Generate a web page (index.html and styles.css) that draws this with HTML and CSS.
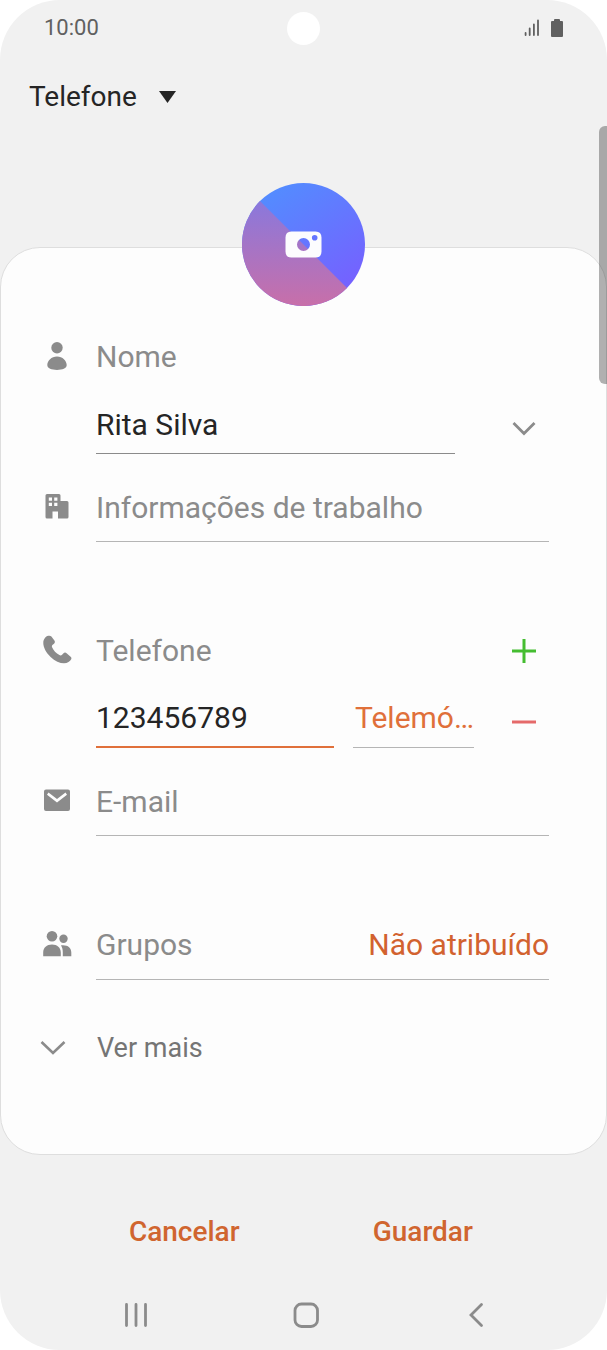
FILE: index.html
```html
<!DOCTYPE html>
<html lang="pt">
<head>
<meta charset="utf-8">
<meta name="viewport" content="width=device-width, initial-scale=1">
<title>Novo contacto</title>
<link rel="stylesheet" href="styles.css">
</head>
<body>
<form class="screen">
  <header class="status">
    <time class="status-time">10:00</time>
    <span class="status-camera"></span>
    <span class="status-icons">
      <svg width="16" height="18" viewBox="0 0 16 18" fill="none" stroke="#606060" stroke-width="1.8" stroke-linecap="round"><path d="M1.6 14v2M5.7 9.500V16M9.900 5.500V16M14 1.500V16"/></svg>
      <svg width="12" height="18" viewBox="0 0 12 18" fill="#606060"><path d="M3 2V1q0-1 1-1h4q1 0 1 1v1h2q1 0 1 1v14q0 1-1 1H1q-1 0-1-1V3q0-1 1-1z"/></svg>
    </span>
  </header>

  <label class="account">
    <select class="account-select" aria-label="Guardar contacto em"><option>Telefone</option></select>
    <svg width="17" height="12" viewBox="0 0 17 12" fill="#252525"><path d="M0 0h17L8.500 12z"/></svg>
  </label>

  <main class="card">
    <button class="avatar" type="button" aria-label="Adicionar fotografia">
      <svg viewBox="0 0 123 123">
        <defs>
          <linearGradient id="blue" x1="0.150" y1="0" x2="0.850" y2="1"><stop offset="0" stop-color="#5090ff"/><stop offset="1" stop-color="#795cff"/></linearGradient>
          <linearGradient id="pink" x1="0" y1="0" x2="0" y2="1"><stop offset="0" stop-color="#8a78dc"/><stop offset="1" stop-color="#c86fa9"/></linearGradient>
        </defs>
        <circle cx="61.500" cy="61.500" r="61.500" fill="url(#blue)"/>
        <path d="M18 18A61.500 61.500 0 0 0 105 105z" fill="url(#pink)"/>
        <path fill="#fcfcfe" fill-rule="evenodd" d="M49.500 48.500h24q6 0 6 6v14q0 6-6 6h-24q-6 0-6-6v-14q0-6 6-6zM61.500 55a6.500 6.500 0 1 0 0 13a6.500 6.500 0 0 0 0-13zM72.700 52a2.800 2.800 0 1 0 0 5.600a2.800 2.800 0 0 0 0-5.600z"/>
      </svg>
    </button>

    <section class="group">
      <div class="row">
        <svg class="icon" viewBox="0 0 34 34"><circle cx="17" cy="7.800" r="5.700"/><path d="M17 16.500c5.600 0 9.700 4.400 9.700 8.600 0 3.300-4.300 4.800-9.700 4.800s-9.700-1.500-9.700-4.800c0-4.200 4.100-8.600 9.700-8.600z"/></svg>
        <label class="title" for="name">Nome</label>
      </div>
      <div class="row row-value">
        <input class="field field-strong" id="name" type="text" value="Rita Silva">
        <button class="tool tool-apart" type="button" aria-label="Mais campos do nome">
          <svg width="24" height="16" viewBox="0 0 24 16" fill="none" stroke="#8b8b8b" stroke-width="2.800"><path d="M1.500 2L12 12.500L22.500 2"/></svg>
        </button>
      </div>
      <div class="row row-next">
        <svg class="icon" viewBox="0 0 34 34"><path fill-rule="evenodd" d="M7 4h12q1.500 0 1.500 1.500V11H27q1.500 0 1.500 1.500V27q0 1.500-1.500 1.500h-9V21.500h-5.500v7H7Q5.500 28.500 5.500 27V5.500Q5.500 4 7 4zM8.800 7.500v3.200H12V7.500zM14.200 7.500v3.200h3.200V7.500zM8.800 12.800V16H12v-3.200zM14.200 12.800V16h3.200v-3.200z"/></svg>
        <input class="field field-line" type="text" aria-label="Informações de trabalho" placeholder="Informações de trabalho">
      </div>
    </section>

    <section class="group">
      <div class="row">
        <svg class="icon" viewBox="0 0 34 34"><path d="M8.300 1.800C5.600 2.400 3.300 5.200 3.300 9c0 4.500 3 10 7.300 13.900 4.200 3.900 9.300 6.400 13.400 6.400 3.600 0 6-1.800 7.200-4 .5-1 .2-1.900-.6-2.600l-4-3.500c-1-.8-2.200-.8-3.100.1l-1.400 1.500c-.7.7-1.800.8-2.700.3-3.300-1.800-6-4.700-7.300-7.800-.4-.9-.2-1.900.6-2.600l1.300-1c1-.9 1.200-2 .4-3.100l-3-4c-.7-.9-1.800-1.100-3.100-.8z"/></svg>
        <label class="title" for="phone">Telefone</label>
        <button class="tool" type="button" aria-label="Adicionar telefone">
          <svg width="24" height="24" viewBox="0 0 24 24" stroke="#45bd31" stroke-width="3"><path d="M0 12h24M12 0v24"/></svg>
        </button>
      </div>
      <div class="row row-value">
        <input class="field field-active" id="phone" type="tel" value="123456789">
        <select class="field phone-type" aria-label="Tipo de telefone"><option>Telemó…</option></select>
        <button class="tool tool-near" type="button" aria-label="Remover telefone">
          <svg width="24" height="4" viewBox="0 0 24 4" stroke="#e56a6a" stroke-width="3"><path d="M0 2h24"/></svg>
        </button>
      </div>
      <div class="row row-next">
        <svg class="icon" viewBox="0 0 34 34"><path fill-rule="evenodd" d="M6 5.500h22q2 0 2 2V25q0 2-2 2H6q-2 0-2-2V7.500q0-2 2-2zM8.500 8.500L7 10.800l10 7.700 10-7.700L25.500 8.500 17 15z"/></svg>
        <input class="field field-line" type="email" aria-label="E-mail" placeholder="E-mail">
      </div>
    </section>

    <section class="group">
      <div class="row">
        <svg class="icon" viewBox="0 0 34 34"><circle cx="12" cy="8.200" r="5.300"/><circle cx="23.500" cy="10.800" r="4.200"/><path d="M3.200 28.200V24.500c0-5 3.600-8 8.800-8s8.800 3 8.800 8v3.700zM21 17.300c6.300-.8 10.300 2 10.300 7.200v3.700h-8.500v-3.700c0-3-.6-5-1.800-7.200z"/></svg>
        <button class="field field-line groups" type="button"><span>Grupos</span><span class="groups-value">Não atribuído</span></button>
      </div>
    </section>

    <button class="more" type="button">
      <svg width="26" height="16" viewBox="0 0 26 16" fill="none" stroke="#8b8b8b" stroke-width="2.600"><path d="M1.500 2L13 13L24.500 2"/></svg>
      Ver mais
    </button>
  </main>

  <div class="actions">
    <button class="action" type="reset">Cancelar</button>
    <button class="action" type="submit">Guardar</button>
  </div>

  <nav class="nav">
    <button class="nav-key" type="button" aria-label="Recentes"><svg width="28" height="28" viewBox="0 0 28 28"><path d="M4.500 3.500v21M14 3.500v21M23.500 3.500v21"/></svg></button>
    <button class="nav-key" type="button" aria-label="Início"><svg width="28" height="28" viewBox="0 0 28 28"><rect x="3" y="3" width="22.500" height="22.500" rx="6.500"/></svg></button>
    <button class="nav-key" type="button" aria-label="Voltar"><svg width="28" height="28" viewBox="0 0 28 28"><path d="M19.500 3.500L9 14l10.500 10.500"/></svg></button>
  </nav>

  <span class="scrollbar"></span>
</form>
</body>
</html>
```

FILE: styles.css
```css
* {
  box-sizing: border-box;
}

body {
  margin: 0;
  background: #fff;
  color: #252525;
  font: 30px/40px Roboto, "Noto Sans", sans-serif;
}

button,
input,
select {
  margin: 0;
  padding: 0;
  border: 0;
  border-radius: 0;
  background: none;
  color: inherit;
  font: inherit;
  appearance: none;
  outline: none;
}

svg {
  display: block;
  flex: none;
}

.screen {
  position: relative;
  display: flex;
  flex-direction: column;
  min-height: 100vh;
  overflow: hidden;
  border-radius: 60px;
  background: #f1f1f1;
}

/* Status bar */
.status {
  display: grid;
  grid-template-columns: 1fr auto 1fr;
  align-items: center;
  height: 56px;
  padding: 0 44px;
  color: #606060;
  font-size: 22px;
}

.status-camera {
  width: 33px;
  height: 33px;
  border-radius: 50%;
  background: #fff;
}

.status-icons {
  display: flex;
  justify-content: flex-end;
  gap: 11px;
}

/* Storage account */
.account {
  display: flex;
  align-items: center;
  align-self: flex-start;
  gap: 22px;
  margin: 21px 0 0 29px;
  font-size: 28px;
}

.account-select {
  height: 40px;
}

/* Contact card */
.card {
  display: flex;
  flex-direction: column;
  margin-top: 130px;
  padding: 0 57px 86px 39px;
  border: 1px solid #dedede;
  border-radius: 40px;
  background: #fdfdfd;
}

.avatar {
  align-self: center;
  width: 123px;
  height: 123px;
  margin: -65px -57px 31px -39px;
  border-radius: 50%;
}

.group {
  margin-bottom: 89px;
}

.group:last-of-type {
  margin-bottom: 48px;
}

.row {
  display: flex;
  align-items: flex-start;
}

.row-value {
  margin-top: 27px;
  padding-left: 56px;
}

.row-next {
  margin-top: 33px;
}

.icon {
  width: 34px;
  height: 34px;
  margin: 3px 22px 0 0;
  fill: #8b8b8b;
}

.title {
  flex: 1;
  color: #8b8b8b;
}

.field {
  flex: 1;
  min-width: 0;
  height: 50px;
  padding-bottom: 9px;
  border-bottom: 1px solid #b5b5b5;
  text-align: left;
}

.field-strong {
  border-color: #8b8b8b;
}

.field-active {
  border-bottom: 2px solid #e0703a;
}

.field-line {
  height: 55px;
  padding-bottom: 14px;
}

.field::placeholder {
  color: #8b8b8b;
  opacity: 1;
}

.phone-type {
  flex: none;
  width: 121px;
  margin-left: 19px;
  padding-left: 2px;
  color: #e0703a;
}

.groups {
  display: flex;
  justify-content: space-between;
  color: #8b8b8b;
}

.groups-value {
  color: #d2622f;
}

.tool {
  display: flex;
  align-items: center;
  justify-content: center;
  width: 50px;
  height: 40px;
}

.tool-apart {
  height: 50px;
  margin-left: 44px;
}

.tool-near {
  height: 48px;
  margin-left: 25px;
}

.more {
  display: flex;
  align-items: center;
  align-self: flex-start;
  gap: 31px;
  color: #757575;
  font-size: 27px;
}

/* Form actions */
.actions {
  display: grid;
  grid-template-columns: 1fr 1fr;
  margin-top: 57px;
  padding: 0 65px;
}

.action {
  color: #d0652f;
  font-size: 28px;
  font-weight: 500;
}

/* System navigation */
.nav {
  display: grid;
  grid-template-columns: repeat(3, 1fr);
  margin-top: auto;
  padding: 0 46px 15px 51px;
}

.nav-key {
  display: grid;
  place-items: center;
  height: 40px;
}

.nav-key svg {
  fill: none;
  stroke: #8b8b8b;
  stroke-width: 2.8;
  stroke-linecap: round;
}

.scrollbar {
  position: absolute;
  top: 126px;
  right: 0;
  width: 8px;
  height: 258px;
  border-radius: 6px 0 0 6px;
  background: rgba(0, 0, 0, 0.3);
}
```
